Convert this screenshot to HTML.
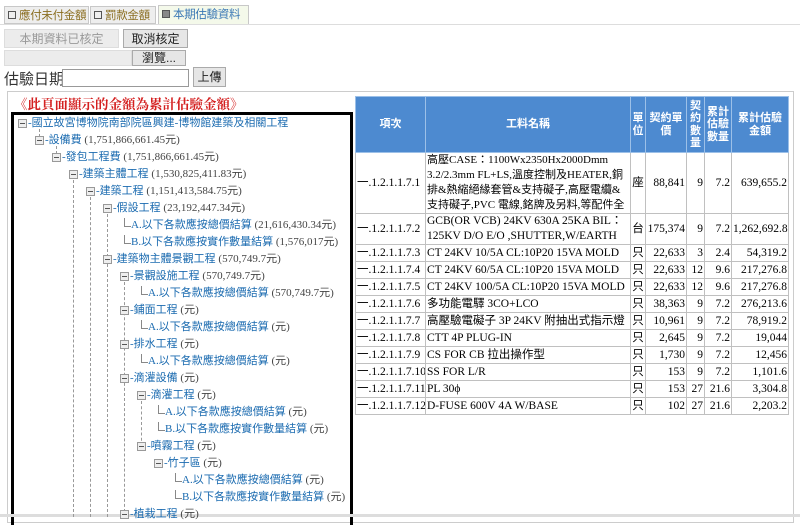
<!DOCTYPE html>
<html><head><meta charset="utf-8"><style>
body{margin:0;width:800px;height:517px;overflow:hidden;background:#fff;font-family:"Liberation Serif","Noto Sans CJK TC",serif;position:relative}
.a{position:absolute;white-space:nowrap}
.tab{position:absolute;top:6px;height:18px;border:1px solid #c8c8c8;background:#eee;font:11.5px "Liberation Sans","Noto Sans CJK TC",sans-serif;color:#8a6d1f;line-height:18px;padding-left:3px;box-sizing:border-box;white-space:nowrap;overflow:hidden;letter-spacing:-0.3px}
.tab i{display:inline-block;width:6px;height:6px;border:1px solid #555;margin-right:3px;vertical-align:0}
.btn{position:absolute;border:1px solid #aaa;background:#e6e6e6;font:12px "Liberation Sans","Noto Sans CJK TC",sans-serif;text-align:center;line-height:18px;color:#222;box-sizing:border-box}
.n{position:absolute;font-size:11px;line-height:14px;color:#1b6bb0;white-space:nowrap}
.n b{font-weight:normal;color:#444}
.ic{position:absolute;width:7px;height:7px;border:1px solid #999;background:#eee}
.ic:after{content:"";position:absolute;left:1px;top:3px;width:5px;height:1px;background:#555}
.dl{position:absolute;width:0;border-left:1px dashed #999}
.lf{position:absolute;width:6px;height:8px;border-left:1px solid #888;border-bottom:1px solid #888}
table{position:absolute;left:355px;top:96px;border-collapse:collapse;font-size:11.5px;table-layout:fixed;width:433px}
td,th{border:1px solid #c0c0c0;padding:0 1px;line-height:15px;white-space:nowrap;overflow:hidden}
tr{height:17px}
th{background:#4d8ad0;color:#fff;font-weight:bold;font-size:11px;line-height:12.5px;border-color:#9cc0e8;white-space:normal;padding:0}
td.r{text-align:right}
td.c{text-align:center;padding:0}
td.s{font-size:11px}
</style></head><body>
<div class="tab" style="left:4px;width:85px"><i></i>應付未付金額</div>
<div class="tab" style="left:90px;width:66px"><i></i>罰款金額</div>
<div class="tab" style="left:158px;width:91px;background:#f4f9ea;color:#3a78b5;top:5px;height:20px"><i style="background:#888"></i>本期估驗資料</div>
<div style="position:absolute;left:0;top:24px;width:800px;border-top:1px solid #ddd"></div>
<div class="btn" style="left:4px;top:29px;width:115px;height:19px;color:#999;background:#ececec;border-color:#ddd">本期資料已核定</div>
<div class="btn" style="left:123px;top:29px;width:65px;height:19px">取消核定</div>
<div class="btn" style="left:4px;top:50px;width:128px;border-color:#ddd;height:16px;background:#ececec"></div>
<div class="btn" style="left:132px;top:50px;width:54px;height:16px;line-height:15px">瀏覽...</div>
<div class="a" style="left:4px;top:68px;font:15px 'Liberation Sans','Noto Sans CJK TC',sans-serif;color:#333">估驗日期</div>
<div style="position:absolute;left:62px;top:69px;width:125px;height:16px;border:1px solid #999"></div>
<div class="btn" style="left:193px;top:67px;width:33px;height:20px">上傳</div>
<div style="position:absolute;left:7px;top:91px;width:785px;height:430px;border:1px solid #ccc"></div>
<div class="a" style="left:14px;top:93px;font-size:13.5px;font-weight:bold;color:#d42020;font-family:'Liberation Serif','Noto Serif CJK SC',serif">《此頁面顯示的金額為累計估驗金額》</div>
<div style="position:absolute;left:11px;top:112px;width:336px;height:410px;border-top:3px solid #000;border-left:3px solid #000;border-right:3px solid #000"></div>
<div style="position:absolute;left:0;top:514px;width:800px;height:3px;background:#ddd"></div>

<div class="dl" style="left:73px;top:180px;height:337px"></div>
<div class="dl" style="left:90px;top:197px;height:320px"></div>
<div class="dl" style="left:107px;top:214px;height:303px"></div>
<div class="dl" style="left:124px;top:282px;height:235px"></div>
<div class="dl" style="left:141px;top:401px;height:45px"></div>
<div class="dl" style="left:39px;top:129px;height:8px"></div>
<div class="dl" style="left:56px;top:146px;height:8px"></div>

<div class="ic" style="left:18px;top:119px"></div><div class="n" style="left:28px;top:116px">-國立故宮博物院南部院區興建-博物館建築及相關工程</div>
<div class="ic" style="left:35px;top:136px"></div><div class="n" style="left:45px;top:133px">-設備費 <b>(1,751,866,661.45元)</b></div>
<div class="ic" style="left:52px;top:153px"></div><div class="n" style="left:62px;top:150px">-發包工程費 <b>(1,751,866,661.45元)</b></div>
<div class="ic" style="left:69px;top:170px"></div><div class="n" style="left:79px;top:167px">-建築主體工程 <b>(1,530,825,411.83元)</b></div>
<div class="ic" style="left:86px;top:187px"></div><div class="n" style="left:96px;top:184px">-建築工程 <b>(1,151,413,584.75元)</b></div>
<div class="ic" style="left:103px;top:204px"></div><div class="n" style="left:113px;top:201px">-假設工程 <b>(23,192,447.34元)</b></div>
<div class="lf" style="left:124px;top:218px"></div><div class="n" style="left:131px;top:218px">A.以下各款應按總價結算 <b>(21,616,430.34元)</b></div>
<div class="lf" style="left:124px;top:235px"></div><div class="n" style="left:131px;top:235px">B.以下各款應按實作數量結算 <b>(1,576,017元)</b></div>
<div class="ic" style="left:103px;top:255px"></div><div class="n" style="left:113px;top:252px">-建築物主體景觀工程 <b>(570,749.7元)</b></div>
<div class="ic" style="left:120px;top:272px"></div><div class="n" style="left:130px;top:269px">-景觀設施工程 <b>(570,749.7元)</b></div>
<div class="lf" style="left:141px;top:286px"></div><div class="n" style="left:148px;top:286px">A.以下各款應按總價結算 <b>(570,749.7元)</b></div>
<div class="ic" style="left:120px;top:306px"></div><div class="n" style="left:130px;top:303px">-鋪面工程 <b>(元)</b></div>
<div class="lf" style="left:141px;top:320px"></div><div class="n" style="left:148px;top:320px">A.以下各款應按總價結算 <b>(元)</b></div>
<div class="ic" style="left:120px;top:340px"></div><div class="n" style="left:130px;top:337px">-排水工程 <b>(元)</b></div>
<div class="lf" style="left:141px;top:354px"></div><div class="n" style="left:148px;top:354px">A.以下各款應按總價結算 <b>(元)</b></div>
<div class="ic" style="left:120px;top:374px"></div><div class="n" style="left:130px;top:371px">-滴灌設備 <b>(元)</b></div>
<div class="ic" style="left:137px;top:391px"></div><div class="n" style="left:147px;top:388px">-滴灌工程 <b>(元)</b></div>
<div class="lf" style="left:158px;top:405px"></div><div class="n" style="left:165px;top:405px">A.以下各款應按總價結算 <b>(元)</b></div>
<div class="lf" style="left:158px;top:422px"></div><div class="n" style="left:165px;top:422px">B.以下各款應按實作數量結算 <b>(元)</b></div>
<div class="ic" style="left:137px;top:442px"></div><div class="n" style="left:147px;top:439px">-噴霧工程 <b>(元)</b></div>
<div class="ic" style="left:154px;top:459px"></div><div class="n" style="left:164px;top:456px">-竹子區 <b>(元)</b></div>
<div class="lf" style="left:175px;top:473px"></div><div class="n" style="left:182px;top:473px">A.以下各款應按總價結算 <b>(元)</b></div>
<div class="lf" style="left:175px;top:490px"></div><div class="n" style="left:182px;top:490px">B.以下各款應按實作數量結算 <b>(元)</b></div>
<div class="ic" style="left:120px;top:510px"></div><div class="n" style="left:130px;top:507px">-植栽工程 <b>(元)</b></div>

<table>
<colgroup><col style="width:70px"><col style="width:205px"><col style="width:15px"><col style="width:41px"><col style="width:18px"><col style="width:27px"><col style="width:57px"></colgroup>
<tr style="height:56px"><th>項次</th><th>工料名稱</th><th>單位</th><th>契約單<br>價</th><th>契約數量</th><th>累計<br>估驗<br>數量</th><th>累計估驗<br>金額</th></tr>
<tr style="height:59px"><td>一.1.2.1.1.7.1</td><td class="s">高壓CASE：1100Wx2350Hx2000Dmm<br>3.2/2.3mm FL+LS,溫度控制及HEATER,銅<br>排&amp;熱縮絕緣套管&amp;支持礙子,高壓電纜&amp;<br>支持礙子,PVC 電線,銘牌及另料,等配件全</td><td class="c">座</td><td class="r">88,841</td><td class="r">9</td><td class="r">7.2</td><td class="r">639,655.2</td></tr>
<tr style="height:29px"><td>一.1.2.1.1.7.2</td><td>GCB(OR VCB) 24KV 630A 25KA BIL：<br>125KV D/O E/O ,SHUTTER,W/EARTH</td><td class="c">台</td><td class="r">175,374</td><td class="r">9</td><td class="r">7.2</td><td class="r">1,262,692.8</td></tr>
<tr><td>一.1.2.1.1.7.3</td><td>CT 24KV 10/5A CL:10P20 15VA MOLD</td><td class="c">只</td><td class="r">22,633</td><td class="r">3</td><td class="r">2.4</td><td class="r">54,319.2</td></tr>
<tr><td>一.1.2.1.1.7.4</td><td>CT 24KV 60/5A CL:10P20 15VA MOLD</td><td class="c">只</td><td class="r">22,633</td><td class="r">12</td><td class="r">9.6</td><td class="r">217,276.8</td></tr>
<tr><td>一.1.2.1.1.7.5</td><td>CT 24KV 100/5A CL:10P20 15VA MOLD</td><td class="c">只</td><td class="r">22,633</td><td class="r">12</td><td class="r">9.6</td><td class="r">217,276.8</td></tr>
<tr><td>一.1.2.1.1.7.6</td><td>多功能電驛 3CO+LCO</td><td class="c">只</td><td class="r">38,363</td><td class="r">9</td><td class="r">7.2</td><td class="r">276,213.6</td></tr>
<tr><td>一.1.2.1.1.7.7</td><td>高壓驗電礙子 3P 24KV 附抽出式指示燈</td><td class="c">只</td><td class="r">10,961</td><td class="r">9</td><td class="r">7.2</td><td class="r">78,919.2</td></tr>
<tr><td>一.1.2.1.1.7.8</td><td>CTT 4P PLUG-IN</td><td class="c">只</td><td class="r">2,645</td><td class="r">9</td><td class="r">7.2</td><td class="r">19,044</td></tr>
<tr><td>一.1.2.1.1.7.9</td><td>CS FOR CB 拉出操作型</td><td class="c">只</td><td class="r">1,730</td><td class="r">9</td><td class="r">7.2</td><td class="r">12,456</td></tr>
<tr><td>一.1.2.1.1.7.10</td><td>SS FOR L/R</td><td class="c">只</td><td class="r">153</td><td class="r">9</td><td class="r">7.2</td><td class="r">1,101.6</td></tr>
<tr><td>一.1.2.1.1.7.11</td><td>PL 30ϕ</td><td class="c">只</td><td class="r">153</td><td class="r">27</td><td class="r">21.6</td><td class="r">3,304.8</td></tr>
<tr><td>一.1.2.1.1.7.12</td><td>D-FUSE 600V 4A W/BASE</td><td class="c">只</td><td class="r">102</td><td class="r">27</td><td class="r">21.6</td><td class="r">2,203.2</td></tr>
</table>
</body></html>
